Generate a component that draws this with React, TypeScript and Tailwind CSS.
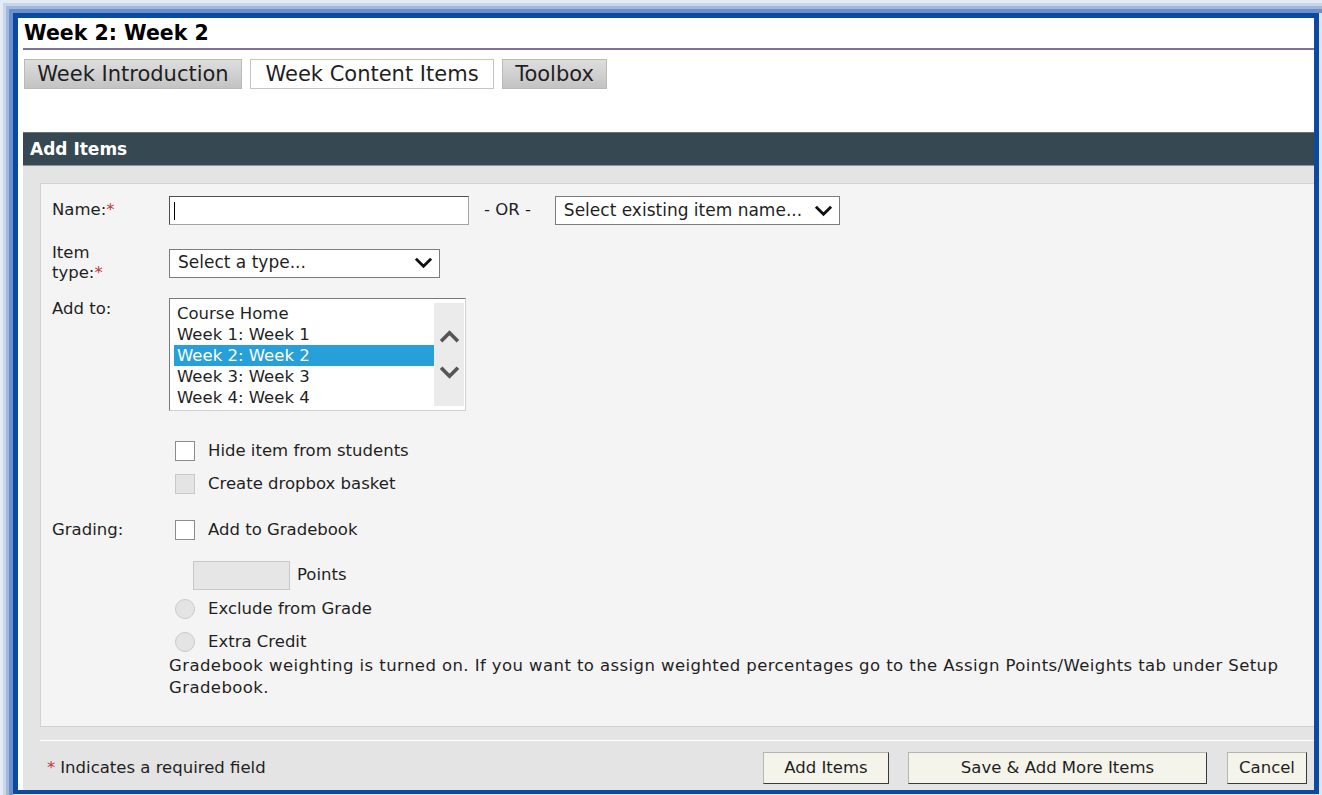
import type { ReactNode } from "react";

function Chevron({ up, className, width = 3 }: { up?: boolean; className?: string; width?: number }) {
  return (
    <svg viewBox="0 0 20 12" className={className} fill="none" stroke="currentColor" strokeWidth={width}>
      <polyline points={up ? "2,10.5 10,2.5 18,10.5" : "2,1.5 10,9.5 18,1.5"} />
    </svg>
  );
}

function Req() {
  return <span className="text-[#c0343a]">*</span>;
}

function FakeSelect({ label, width }: { label: string; width: string }) {
  return (
    <div className={`flex h-[29px] items-center justify-between border border-[#7c7c7c] bg-white pl-[8px] pr-[6px] text-[17px] ${width}`}>
      <span>{label}</span>
      <Chevron className="h-[12px] w-[19px] text-[#111]" />
    </div>
  );
}

function Check({ disabled, children }: { disabled?: boolean; children: ReactNode }) {
  return (
    <div className="flex h-[20px] items-center gap-[13px] leading-[20px]">
      <span
        className={`h-[20px] w-[20px] border ${disabled ? "border-[#c9c9c9] bg-[#e4e4e4]" : "border-[#8c8c8c] bg-white"}`}
      />
      <span>{children}</span>
    </div>
  );
}

function Radio({ children }: { children: ReactNode }) {
  return (
    <div className="flex h-[20px] items-center gap-[13px] leading-[20px]">
      <span className="h-[20px] w-[20px] rounded-full border border-[#cacaca] bg-[#e4e4e4]" />
      <span>{children}</span>
    </div>
  );
}

const units = ["Course Home", "Week 1: Week 1", "Week 2: Week 2", "Week 3: Week 3", "Week 4: Week 4"];

export default function App() {
  return (
    <div className="h-[795px] w-[1322px] overflow-hidden bg-[#dfe6f0] font-['DejaVu_Sans','Verdana',sans-serif] text-[16.5px] text-[#1f1f1f]">
      {/* window shadow bands */}
      <div className="h-full border-l-[3px] border-t-[3px] border-[#e4ebf4]">
        <div className="h-full border-l-[3px] border-t-[3px] border-[#c8d6ea]">
          <div className="h-full border-l-[3px] border-t-[3px] border-[#9fb8dc]">
            <div className="h-full border-l-[4px] border-t-[4px] border-[#6d8fcb]">
              <div className="mb-[1px] mr-[3px] h-[calc(100%-1px)] border-[5px] border-b-[4px] border-[#0b4aa3] bg-white">
                <div className="flex h-full flex-col overflow-hidden pl-[5px]">
                  <div className="h-[30px] pl-[1px] text-[20.5px] font-bold leading-[30px] text-black">Week 2: Week 2</div>
                  <div className="h-[2px] bg-[#7f719e]" />

                  {/* tabs */}
                  <div className="mt-[9px] flex gap-[8px] pl-[1px] text-[21px] leading-[28px]">
                    <div className="h-[30px] w-[218px] border border-[#b9b9b9] bg-linear-to-b from-[#dedede] to-[#c3c3c3] text-center">
                      Week Introduction
                    </div>
                    <div className="h-[30px] w-[244px] border border-[#c4c4c4] bg-white text-center">Week Content Items</div>
                    <div className="h-[30px] w-[105px] border border-[#b9b9b9] bg-linear-to-b from-[#dedede] to-[#c3c3c3] text-center">
                      Toolbox
                    </div>
                  </div>

                  <div className="mt-[43px] h-[34px] border-b border-t border-b-[#8b979d] border-t-[#66757d] bg-[#364852] pl-[7px] text-[17px] font-bold leading-[32px] text-white">
                    Add Items
                  </div>

                  <div className="flex flex-1 flex-col bg-[#e4e4e4] pl-[17px] pt-[17px]">
                    {/* form panel */}
                    <div className="h-[544px] border border-r-0 border-[#d2d2d2] bg-[#f4f4f4] pl-[11px] pt-[12px]">
                      <div className="flex h-[29px] items-center">
                        <div className="w-[117px] shrink-0">
                          Name:<Req />
                        </div>
                        <div className="flex h-[29px] w-[300px] items-center border border-b-[#a3a3a3] border-l-[#4f4f4f] border-r-[#a3a3a3] border-t-[#4f4f4f] bg-white pl-[4px]">
                          <span className="h-[18px] w-[1px] bg-black" />
                        </div>
                        <span className="ml-[15px]">- OR -</span>
                        <div className="ml-[24px]">
                          <FakeSelect label="Select existing item name..." width="w-[285px]" />
                        </div>
                      </div>

                      <div className="mt-[18px] flex items-center">
                        <div className="w-[117px] shrink-0 leading-[20px]">
                          Item
                          <br />
                          type:<Req />
                        </div>
                        <FakeSelect label="Select a type..." width="w-[271px]" />
                      </div>

                      <div className="mt-[15px] flex items-start">
                        <div className="w-[117px] shrink-0 pt-[1px] leading-[20px]">Add to:</div>
                        <div className="flex h-[113px] w-[297px] border border-b-[#d0d0d0] border-l-[#7a7a7a] border-r-[#d0d0d0] border-t-[#7a7a7a] bg-white">
                          <div className="flex-1 pl-[4px] pt-[4px]">
                            {units.map((u) => (
                              <div
                                key={u}
                                className={`h-[21px] pl-[3px] leading-[21px] ${u === "Week 2: Week 2" ? "bg-[#279fd9] text-white" : ""}`}
                              >
                                {u}
                              </div>
                            ))}
                          </div>
                          <div className="my-[4px] mr-[1px] flex w-[30px] flex-col items-center justify-center gap-[23px] bg-[#ebebeb] text-[#555]">
                            <Chevron up width={3.5} className="h-[13px] w-[21px]" />
                            <Chevron width={3.5} className="h-[13px] w-[21px]" />
                          </div>
                        </div>
                      </div>

                      <div className="mt-[30px] pl-[123px]">
                        <Check>Hide item from students</Check>
                        <div className="mt-[13px]">
                          <Check disabled>Create dropbox basket</Check>
                        </div>
                      </div>

                      <div className="mt-[26px] flex items-center">
                        <div className="w-[123px] shrink-0 leading-[20px]">Grading:</div>
                        <Check>Add to Gradebook</Check>
                      </div>

                      <div className="pl-[117px]">
                        <div className="mt-[21px] flex items-center pl-[24px]">
                          <span className="h-[29px] w-[97px] border border-[#c8c8c8] bg-[#e6e6e6]" />
                          <span className="ml-[7px]">Points</span>
                        </div>
                        <div className="mt-[9px] pl-[6px]">
                          <Radio>Exclude from Grade</Radio>
                        </div>
                        <div className="mt-[13px] pl-[6px]">
                          <Radio>Extra Credit</Radio>
                        </div>
                        <p className="mt-[3px] w-[1135px] leading-[22px] tracking-[0.42px]">
                          Gradebook weighting is turned on. If you want to assign weighted percentages go to the Assign
                          Points/Weights tab under Setup Gradebook.
                        </p>
                      </div>
                    </div>

                    {/* footer */}
                    <div className="mt-[13px] flex flex-1 items-start border-t border-white px-[7px] pt-[11px]">
                      <div className="flex h-[32px] items-center">
                        <Req />
                        <span className="ml-[5px]">Indicates a required field</span>
                      </div>
                      <div className="ml-auto flex">
                        <button className="h-[32px] w-[126px] border border-b-[#3a3a3a] border-l-[#b5b5b5] border-r-[#3a3a3a] border-t-[#b5b5b5] bg-[#f5f4ea]">
                          Add Items
                        </button>
                        <button className="ml-[19px] h-[32px] w-[299px] border border-b-[#3a3a3a] border-l-[#b5b5b5] border-r-[#3a3a3a] border-t-[#b5b5b5] bg-[#f5f4ea]">
                          Save &amp; Add More Items
                        </button>
                        <button className="ml-[20px] h-[32px] w-[80px] border border-b-[#3a3a3a] border-l-[#b5b5b5] border-r-[#3a3a3a] border-t-[#b5b5b5] bg-[#f5f4ea]">
                          Cancel
                        </button>
                      </div>
                    </div>
                  </div>
                </div>
              </div>
            </div>
          </div>
        </div>
      </div>
    </div>
  );
}
